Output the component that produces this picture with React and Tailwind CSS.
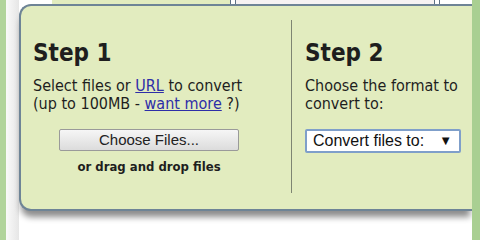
export default function App() {
  const sans = { fontFamily: '"DejaVu Sans Condensed", "DejaVu Sans", Tahoma, sans-serif' };
  const arial = { fontFamily: '"Liberation Sans", Arial, sans-serif' };
  return (
    <div className="w-[480px] h-[240px] bg-white flex overflow-hidden relative">
      <div className="w-[6px] h-full bg-[#b1d49b]" />
      <div className="w-[13px] h-full bg-gradient-to-r from-[#fafafa] to-[#e6e6e6]" />
      <div className="w-[453px] flex flex-col">
        <div className="h-[4px] flex">
          <div className="w-[33px] bg-white" />
          <div className="w-[178px] bg-[#e2ecbf]" />
          <div className="w-[6px] bg-white border-x border-[#5d7184]" />
          <div className="w-[198px] bg-[#f6f2f2]" />
          <div className="w-[6px] bg-white border-x border-[#5d7184]" />
          <div className="flex-1 bg-white" />
        </div>
        <div
          className="h-[207px] bg-[#e2ecbf] border-l-2 border-b-2 border-t-2 border-[#6e8496] rounded-tl-[12px] rounded-bl-[12px] shadow-[0_8px_6px_-2px_rgba(0,0,0,0.45)] flex pt-[14px] pb-[16px]"
          style={sans}
        >
          <div className="w-[270px] pl-[12px] pt-[19px] text-[#1e1e1e]">
            <div className="text-[24px] font-bold leading-[28px]">Step 1</div>
            <div className="mt-[10px] text-[16px] leading-[18px]">
              Select files or <span className="text-[#2e2ea8] underline">URL</span> to convert
              <br />
              (up to 100MB - <span className="text-[#2e2ea8] underline">want more</span> ?)
            </div>
            <div className="mt-[16px] flex flex-col items-center w-[232px]">
              <div
                className="w-[180px] h-[22px] border border-[#9a9a9a] rounded-[2px] bg-gradient-to-b from-[#f6f6f6] to-[#dcdcdc] flex items-center justify-center text-[15px] text-[#222]"
                style={arial}
              >
                Choose Files...
              </div>
              <div className="mt-[8px] text-[13px] font-bold leading-[16px]">or drag and drop files</div>
            </div>
          </div>
          <div className="w-[1px] bg-[#7e8572]" />
          <div className="flex-1 pl-[13px] pt-[19px] text-[#1e1e1e]">
            <div className="text-[24px] font-bold leading-[28px]">Step 2</div>
            <div className="mt-[10px] text-[16px] leading-[18px]">
              Choose the format to
              <br />
              convert to:
            </div>
            <div
              className="mt-[16px] w-[156px] h-[24px] border-2 border-[#7f9fca] rounded-[2px] bg-white flex items-center justify-between pl-[6px] pr-[7px] text-[16px] text-[#111]"
              style={arial}
            >
              <span>Convert files to:</span>
              <span className="text-[13px]">▼</span>
            </div>
          </div>
        </div>
      </div>
      <div className="w-[8px] h-full bg-[#a9cf92]" />
    </div>
  );
}
